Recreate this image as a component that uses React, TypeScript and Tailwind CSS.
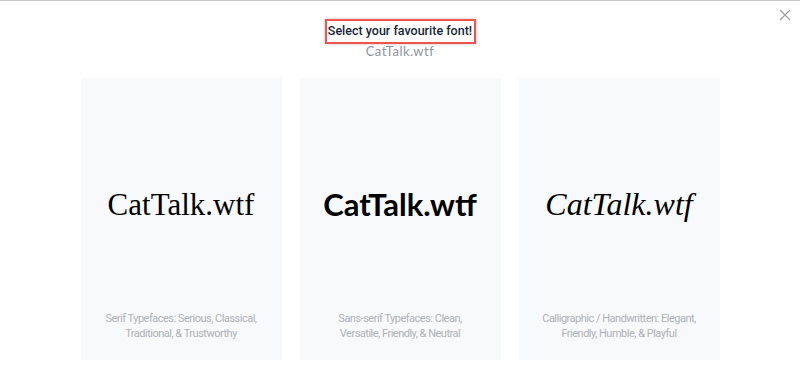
import React from "react";

const cards = [
  {
    font: "'Liberation Serif', 'DejaVu Serif', serif",
    weight: 400,
    italic: false,
    size: "text-[31px]",
    desc: ["Serif Typefaces: Serious, Classical,", "Traditional, & Trustworthy"],
  },
  {
    font: "Lato, 'Open Sans', sans-serif",
    weight: 700,
    italic: false,
    size: "text-[31px]",
    desc: ["Sans-serif Typefaces: Clean,", "Versatile, Friendly, & Neutral"],
  },
  {
    font: "'Liberation Serif', 'DejaVu Serif', serif",
    weight: 400,
    italic: true,
    size: "text-[32px]",
    desc: ["Calligraphic / Handwritten: Elegant,", "Friendly, Humble, & Playful"],
  },
];

export default function App() {
  return (
    <div className="relative h-[382px] w-[800px] overflow-hidden bg-white border-t border-[#c8c8c8]" style={{ fontFamily: "Roboto, sans-serif" }}>
      <button className="absolute right-[9px] top-[8px] text-[#a0a0a0]">
        <svg width="12" height="12" viewBox="0 0 12 12" fill="none" stroke="currentColor" strokeWidth="1.2">
          <path d="M1 1L11 11M11 1L1 11" />
        </svg>
      </button>
      <div className="flex flex-col items-center pt-[18px]">
        <div className="border-2 border-[#ef5350] h-[25px] w-[151px] flex items-center justify-center shadow-[0_0_3px_rgba(0,0,0,0.25)]">
          <h1 className="text-[12.5px] font-medium text-[#1a1f36] leading-none whitespace-nowrap">Select your favourite font!</h1>
        </div>
        <div className="-mt-[1px] text-[13px] text-[#8f949c] tracking-[0.5px] leading-[16px]" style={{ fontFamily: "Lato, sans-serif" }}>
          CatTalk.wtf
        </div>
      </div>
      <div className="mx-auto mt-[19px] grid w-[639px] grid-cols-3 gap-[18px]">
        {cards.map((c, i) => (
          <div key={i} className="flex h-[282px] flex-col items-center bg-[#f8f9fa]">
            <div className="flex h-[233px] items-center justify-center pt-[19px]">
              <span
                className={`${c.size} text-black leading-none`}
                style={{ fontFamily: c.font, fontWeight: c.weight, fontStyle: c.italic ? "italic" : "normal" }}
              >
                CatTalk.wtf
              </span>
            </div>
            <p className="text-center text-[11px] leading-[15px] tracking-[-0.5px] text-[#adb1b8]">
              {c.desc[0]}
              <br />
              {c.desc[1]}
            </p>
          </div>
        ))}
      </div>
    </div>
  );
}
